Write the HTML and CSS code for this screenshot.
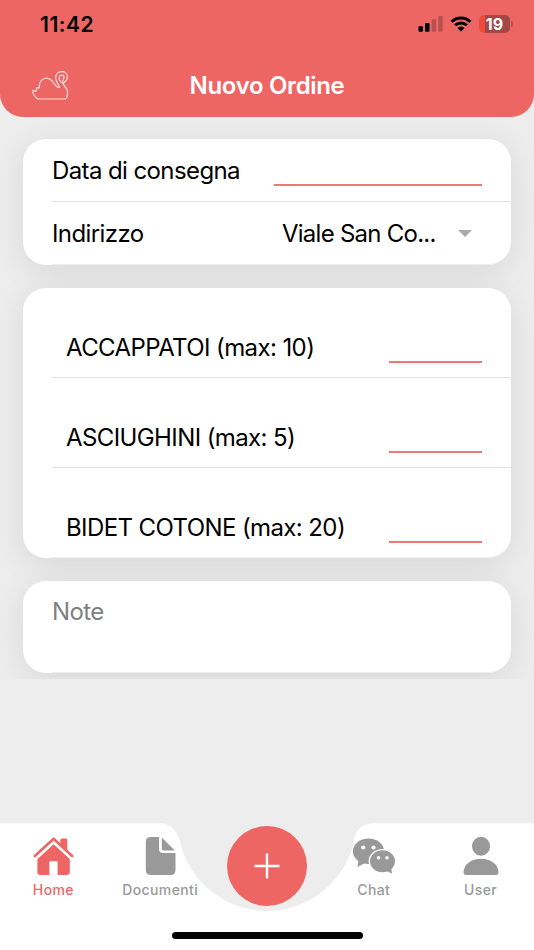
FILE: index.html
```html
<!DOCTYPE html>
<html lang="it">
<head>
  <meta charset="UTF-8">
  <meta name="viewport" content="width=device-width, initial-scale=1.0">
  <title>Nuovo Ordine</title>
  <link rel="stylesheet" href="styles.css">
</head>
<body>
  <div class="app">
    <header class="header">
      <div class="status-bar">
        <span class="time">11:42</span>
        <div class="status-icons">
          <svg class="signal" width="26" height="18" viewBox="0 0 26 18">
            <rect x="0.5" y="11" width="4.5" height="5.8" rx="1.2" />
            <rect x="7" y="8" width="4.5" height="8.8" rx="1.2" />
            <rect class="off" x="13.6" y="4.3" width="4.5" height="12.5" rx="1.2" />
            <rect class="off" x="20.2" y="1" width="4.5" height="15.8" rx="1.2" />
          </svg>
          <svg class="wifi" width="22" height="18" viewBox="0 0 22 18">
            <path d="M1.6 6.8 A13.4 13.4 0 0 1 20.4 6.8" />
            <path d="M5.1 10.3 A8.4 8.4 0 0 1 16.9 10.3" />
            <path class="dot" d="M7.6 13 Q11 10.2 14.4 13 L11.6 15.9 Q11 16.4 10.4 15.9 Z" />
          </svg>
          <div class="battery">19</div>
        </div>
      </div>
      <div class="title-bar">
        <svg class="logo" width="38" height="30" viewBox="0 0 38 30">
          <path d="M5.8 28 C3 26 0.8 23 0.8 19.2 L4.2 20.4 L4.8 16.6 L7.4 16.8 C6.6 11 10.5 6.9 15 7.2 C20.5 7.6 22 13.5 25 15.8 L27.6 16.4 C26.4 13 23.7 11 23.7 6.8 C23.7 -1.3 35.6 -1.3 35.4 6 C35.3 9.3 33 11 31.2 12.4 C31.6 15.4 35.6 16.8 35.5 21 C35.5 24.5 35 27 33.5 28 Z" />
          <path d="M31.2 12.4 C28.3 11.5 26.6 8.5 27.4 5.8 C28.4 3.2 32.4 3.8 32 6.6 C31.7 8.6 29.8 9.4 31.2 12.4" />
        </svg>
        <h1>Nuovo Ordine</h1>
      </div>
    </header>

    <!-- Order form -->
    <form class="order-form">
      <div class="card">
        <div class="row">
          <label for="data">Data di consegna</label>
          <input type="text" id="data" class="date-input">
        </div>
        <div class="row">
          <span>Indirizzo</span>
          <div class="select">
            <span class="address">Viale San Co...</span>
            <span class="arrow"></span>
          </div>
        </div>
      </div>

      <div class="card">
        <div class="row item">
          <label for="accappatoi">ACCAPPATOI (max: 10)</label>
          <input type="text" id="accappatoi" class="qty-input">
        </div>
        <div class="row item">
          <label for="asciughini">ASCIUGHINI (max: 5)</label>
          <input type="text" id="asciughini" class="qty-input">
        </div>
        <div class="row item">
          <label for="bidet">BIDET COTONE (max: 20)</label>
          <input type="text" id="bidet" class="qty-input">
        </div>
      </div>

      <div class="card">
        <div class="row note">
          <span>Note</span>
        </div>
      </div>
    </form>

    <!-- Bottom navigation -->
    <nav class="tabbar">
      <svg class="tabbar-bg" width="534" height="127" viewBox="0 0 534 127">
        <path d="M0 0.3 H160 C171 0.3 178 8 180.3 20.3 A89.4 89.4 0 0 0 353.7 20.3 C354 8 362 0.3 374 0.3 H534 V127 H0 Z" />
      </svg>
      <div class="tabs">
        <a class="tab active">
          <svg width="42" height="40" viewBox="0 0 42 40">
            <path d="M5.4 20.5 L21.6 5.8 L37.8 20.5 V36 Q37.8 39 34.8 39 H25.6 V25.2 H17.4 V39 H8.4 Q5.4 39 5.4 36 Z" />
            <path d="M28.3 8 V4 Q28.3 2.5 29.8 2.5 H33.8 Q35.3 2.5 35.3 4 V15 Z" />
            <path class="gap" d="M3.5 21.3 L21.6 5 L39.7 21.3" />
            <path class="roof" d="M2.9 20 L21.6 2.8 L40.2 20" />
          </svg>
          <span>Home</span>
        </a>
        <a class="tab">
          <svg width="42" height="40" viewBox="0 0 42 40">
            <path d="M11 1 H20 V13 Q20 17 24 17 H36.5 V34 Q36.5 39 31.5 39 H11.8 Q6.8 39 6.8 34 V6 Q6.8 1 11.8 1 Z" />
            <path d="M22.8 1.5 L35.8 14.5 H24.8 Q22.8 14.5 22.8 12.5 Z" />
          </svg>
          <span>Documenti</span>
        </a>
        <div class="tab"></div>
        <a class="tab">
          <svg class="chat" width="44" height="40" viewBox="0 0 44 40">
            <ellipse cx="16.5" cy="15.3" rx="15.6" ry="12.8" />
            <path d="M6.5 24 L5.5 31 L14 26.5 Z" />
            <ellipse class="outline" cx="30.5" cy="25.3" rx="13.2" ry="11.7" />
            <path d="M34 34.5 L40 37.8 L39.2 32 Z" />
            <g class="eyes">
              <circle cx="11.2" cy="11.5" r="2.1" />
              <circle cx="21.5" cy="11.5" r="2.1" />
              <circle cx="26.6" cy="21.8" r="1.7" />
              <circle cx="35" cy="21.8" r="1.7" />
            </g>
          </svg>
          <span>Chat</span>
        </a>
        <a class="tab">
          <svg width="42" height="40" viewBox="0 0 42 40">
            <ellipse cx="21" cy="10.3" rx="9" ry="9.5" />
            <path d="M3.5 36 C4 28 11.5 22.7 21 22.7 C30.5 22.7 38 28 38.5 36 Q38.5 39 36 39 H6 Q3.5 39 3.5 36 Z" />
          </svg>
          <span>User</span>
        </a>
      </div>
      <button class="fab" type="button">
        <svg width="26" height="26" viewBox="0 0 26 26">
          <path d="M13 0.5 V25.5 M0.5 13 H25.5" />
        </svg>
      </button>
      <div class="home-indicator"></div>
    </nav>
  </div>
</body>
</html>
```

FILE: styles.css
```css
* {
  box-sizing: border-box;
}

body {
  margin: 0;
  font-family: Inter, "Liberation Sans", sans-serif;
  background: #ededed;
}

.app {
  display: flex;
  flex-direction: column;
  width: 534px;
  height: 950px;
  overflow: hidden;
}

/* Header */
.header {
  position: relative;
  z-index: 1;
  height: 116.5px;
  background: #ed6664;
  border-radius: 0 0 23px 23px;
}

.status-bar {
  display: flex;
  justify-content: space-between;
  align-items: center;
  height: 48px;
  padding: 0 21px 0 40px;
}

.time {
  font-size: 21px;
  font-weight: 600;
  letter-spacing: 0.5px;
}

.status-icons {
  display: flex;
  align-items: center;
}

.signal {
  margin-right: 6px;
}

.signal .off {
  opacity: 0.22;
}

.wifi {
  margin-right: 7px;
}

.wifi path {
  fill: none;
  stroke: #000;
  stroke-width: 3;
}

.wifi .dot {
  fill: #000;
  stroke: none;
}

.battery {
  position: relative;
  width: 31px;
  height: 17.5px;
  margin-right: 3px;
  border-radius: 5px;
  background: linear-gradient(to right, #ee4b3c 6px, #a44847 6px);
  color: #fff;
  font-size: 16px;
  font-weight: 700;
  line-height: 18px;
  text-align: center;
}

.battery::after {
  content: "";
  position: absolute;
  top: 6px;
  right: -3px;
  width: 2px;
  height: 6px;
  border-radius: 0 2px 2px 0;
  background: #b95251;
}

.title-bar {
  display: grid;
  grid-template-columns: 120px 1fr 120px;
  align-items: center;
  height: 75px;
}

.logo {
  margin-left: 32px;
}

.logo path {
  fill: none;
  stroke: #fbdcdc;
  stroke-width: 1.2;
  stroke-linejoin: round;
}

h1 {
  margin: 0;
  color: #fff;
  font-size: 24px;
  font-weight: 600;
  letter-spacing: -0.35px;
  text-align: center;
  white-space: nowrap;
}

/* Form */
.order-form {
  display: flex;
  flex-direction: column;
  gap: 23px;
  height: 562.5px;
  padding: 22.5px 23px 0;
  overflow: hidden;
}

.card {
  flex-shrink: 0;
  padding-left: 29px;
  background: #fff;
  border-radius: 23px;
  box-shadow: 0 6px 34px rgba(0, 0, 0, 0.09);
}

.row {
  display: flex;
  justify-content: space-between;
  align-items: center;
  height: 63px;
  padding-top: 1px;
  padding-right: 29px;
  border-bottom: 1px solid #e2e2e2;
  font-size: 24px;
  letter-spacing: -0.6px;
  white-space: nowrap;
}

.row:last-child {
  border-bottom-color: #eee;
  border-bottom-right-radius: 23px;
}

input {
  height: 30px;
  padding: 0;
  border: none;
  border-bottom: 2px solid #ef7876;
  background: none;
  font: inherit;
  outline: none;
}

.date-input {
  width: 208px;
}

.select {
  display: flex;
  justify-content: space-between;
  align-items: center;
  width: 200px;
  padding-right: 10px;
}

.address {
  letter-spacing: -0.75px;
}

.arrow {
  border: 7px solid transparent;
  border-top-color: #aaa;
  border-bottom: none;
}

.item {
  align-items: flex-end;
  height: 90px;
  padding-left: 14px;
  padding-bottom: 14px;
}

.item label {
  padding-bottom: 0.6px;
}

.qty-input {
  width: 93px;
}

.note {
  align-items: flex-start;
  height: 91.5px;
  padding-top: 16px;
  color: #808080;
}

/* Bottom navigation */
.tabbar {
  position: relative;
  height: 127px;
  margin-top: auto;
}

.tabbar-bg {
  position: absolute;
  top: 0;
  left: 0;
  fill: #fff;
}

.tabs {
  position: relative;
  display: grid;
  grid-template-columns: repeat(5, 1fr);
  padding-top: 13px;
}

.tab {
  display: flex;
  flex-direction: column;
  align-items: center;
  color: #999;
  fill: #999;
  font-size: 14px;
  font-weight: 500;
  line-height: 18px;
  letter-spacing: 0.4px;
}

.tab span {
  margin-top: 5px;
}

.tab.active {
  color: #ed6664;
  fill: #ed6664;
}

.gap,
.roof {
  fill: none;
  stroke: #fff;
  stroke-width: 5;
}

.roof {
  stroke: #ed6664;
  stroke-width: 2.6;
  stroke-linecap: round;
  stroke-linejoin: round;
}

.outline {
  stroke: #fff;
  stroke-width: 1.4;
}

.eyes {
  fill: #fff;
}

.fab {
  position: absolute;
  top: 3px;
  left: 227px;
  display: flex;
  justify-content: center;
  align-items: center;
  width: 80px;
  height: 80px;
  padding: 0;
  border: none;
  border-radius: 50%;
  background: #ed6664;
}

.fab path {
  stroke: #fff;
  stroke-width: 2.4;
}

.home-indicator {
  position: absolute;
  bottom: 11px;
  left: 171.5px;
  width: 191px;
  height: 7.5px;
  border-radius: 4px;
  background: #000;
}
```
